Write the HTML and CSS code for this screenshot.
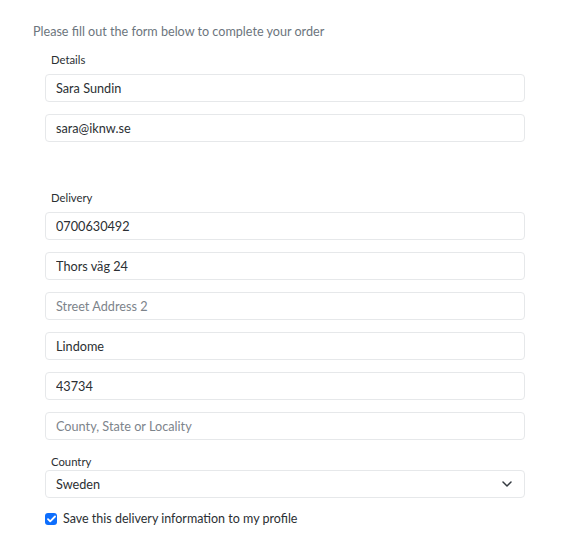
FILE: index.html
```html
<!DOCTYPE html>
<html lang="en">
<head>
<meta charset="utf-8">
<title>Order form</title>
<link rel="stylesheet" href="styles.css">
</head>
<body>
<p class="intro">Please fill out the form below to complete your order</p>
<form class="form">
  <div class="group group-details">
    <label class="label">Details</label>
    <input class="field" type="text" value="Sara Sundin">
    <input class="field" type="email" value="sara@iknw.se">
  </div>
  <div class="group group-delivery">
    <label class="label">Delivery</label>
    <input class="field" type="text" value="0700630492">
    <input class="field" type="text" value="Thors väg 24">
    <input class="field" type="text" placeholder="Street Address 2">
    <input class="field" type="text" value="Lindome">
    <input class="field" type="text" value="43734">
    <input class="field" type="text" placeholder="County, State or Locality">
  </div>
  <div class="country">
    <label class="label label-country">Country</label>
    <div class="select">
      <span>Sweden</span>
      <svg class="chev" width="10" height="6" viewBox="0 0 10 6"><path d="M1 1l4 4 4-4" fill="none" stroke="#343a40" stroke-width="1.5" stroke-linecap="round" stroke-linejoin="round"/></svg>
    </div>
  </div>
  <label class="check">
    <span class="box"><svg width="9" height="8" viewBox="0 0 9 8"><path d="M1 4.2l2.2 2.2L8 1.5" fill="none" stroke="#fff" stroke-width="1.8" stroke-linecap="round" stroke-linejoin="round"/></svg></span>
    <span>Save this delivery information to my profile</span>
  </label>
</form>
</body>
</html>
```

FILE: styles.css
```css
* { box-sizing: border-box; }
body {
  margin: 0;
  background: #fff;
  font-family: Lato, "Open Sans", "Liberation Sans", sans-serif;
  color: #2b2f33;
}
.intro {
  margin: 22px 0 0 33px;
  line-height: 20px;
  font-size: 12.6px;
  color: #6c757d;
}
.form {
  margin: 0 0 0 45px;
  width: 480px;
  display: flex;
  flex-direction: column;
}
.group {
  display: flex;
  flex-direction: column;
  gap: 12px;
}
.group-details { margin-top: 11px; }
.group-delivery { margin-top: 49px; }
.label {
  display: block;
  padding: 0 0 0 6px;
  font-size: 11.3px;
  line-height: 14px;
  height: 14px;
  margin-bottom: -5px;
  color: #2b2f33;
}
.field {
  display: block;
  width: 480px;
  height: 28px;
  border: 1px solid #e6e8ea;
  border-radius: 4px;
  padding: 0 10px;
  font-family: inherit;
  font-size: 12.7px;
  color: #2b2f33;
  background: #fff;
  outline: none;
}
.field::placeholder { color: #7d848b; }
.country {
  margin-top: 15px;
  display: flex;
  flex-direction: column;
  gap: 1px;
}
.label-country { margin-bottom: 0; }
.select {
  height: 28px;
  border: 1px solid #e6e8ea;
  border-radius: 4px;
  padding: 0 12px 0 10px;
  display: flex;
  align-items: center;
  justify-content: space-between;
  font-size: 12.7px;
}
.check {
  margin-top: 13px;
  display: flex;
  align-items: center;
  gap: 6px;
  font-size: 12.5px;
  line-height: 16px;
}
.box {
  width: 12px;
  height: 12px;
  border-radius: 3px;
  background: #0d6efd;
  display: flex;
  align-items: center;
  justify-content: center;
}
```
